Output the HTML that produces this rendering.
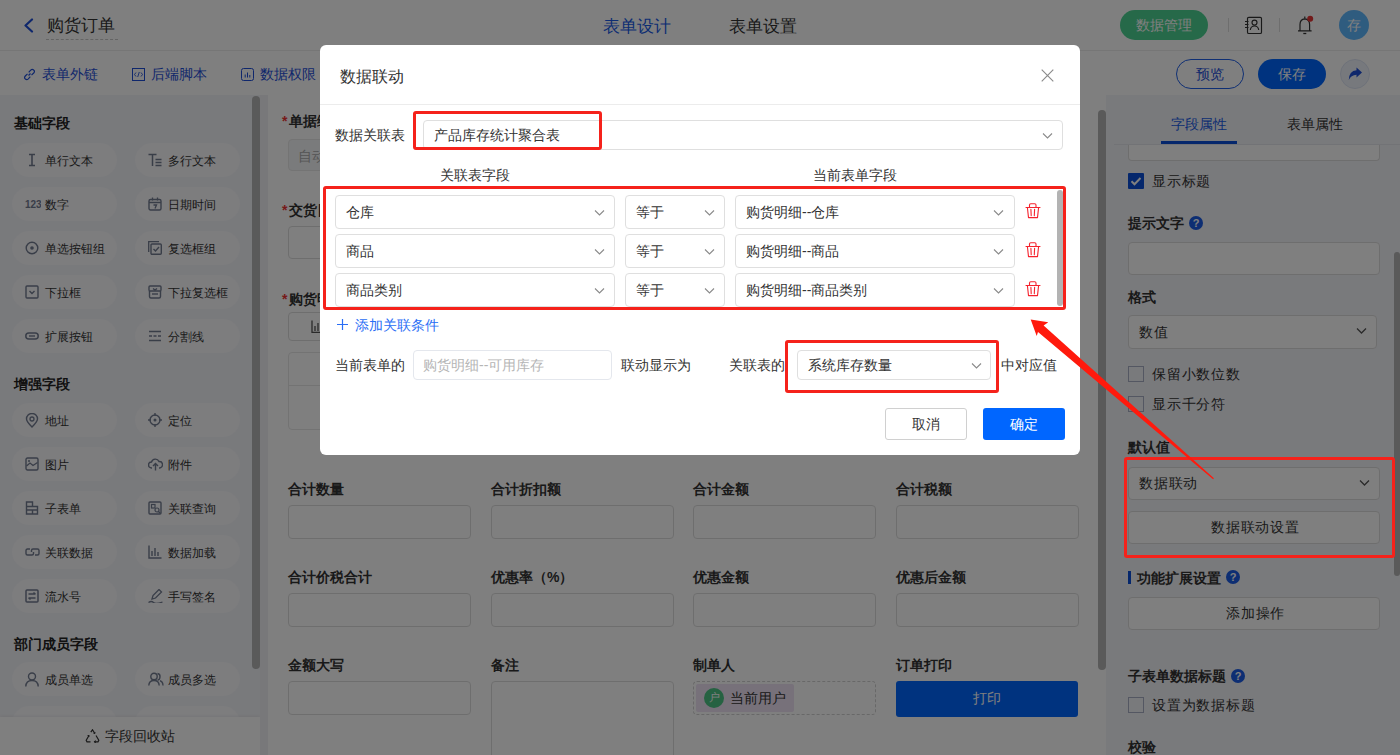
<!DOCTYPE html>
<html><head><meta charset="utf-8">
<style>
*{box-sizing:border-box;margin:0;padding:0}
html,body{width:1400px;height:755px;overflow:hidden;background:#fff;font-family:"Liberation Sans",sans-serif;color:#333;font-size:14px}
.a{position:absolute}
svg{display:block}
.t{position:absolute;white-space:nowrap;line-height:1}
/* header */
#hdr{left:0;top:0;width:1400px;height:51px;background:#fff;border-bottom:1px solid #ececec}
#tb{left:0;top:51px;width:1400px;height:44px;background:#fff}
#lp{left:0;top:95px;width:260px;height:660px;background:#f3f4f8}
#cv{left:260px;top:95px;width:848px;height:660px;background:#f0f1f5}
#form{left:268px;top:95px;width:838px;height:660px;background:#fff}
#rp{left:1106px;top:95px;width:294px;height:660px;background:#f3f4f8}
.pill{position:absolute;height:34px;border-radius:17px;background:#fafafd;width:106px}
.pill span{position:absolute;left:30px;top:11.8px;font-size:12px;line-height:13px;color:#333;white-space:nowrap}
.sec{position:absolute;left:14px;font-size:14px;font-weight:bold;color:#222;line-height:1}
.flab{position:absolute;font-size:14px;font-weight:bold;color:#333;line-height:1;white-space:nowrap}
.finp{position:absolute;height:33px;border:1px solid #ddd;border-radius:4px;background:#fff}
#ov{left:0;top:0;width:1400px;height:755px;background:rgba(0,0,0,.5)}
#modal{left:320px;top:45px;width:760px;height:410px;background:#fff;border-radius:6px}
.sel{position:absolute;height:33px;border:1px solid #dfdfdf;border-radius:4px;background:#fff}
.sel span{position:absolute;left:10px;top:9px;font-size:13px;line-height:14px;color:#333;white-space:nowrap}
.chev{position:absolute;top:12px;width:8px;height:8px}
.red{position:absolute;border:3px solid #f5221b;border-radius:3px}
</style></head><body>
<!-- HEADER -->
<div id="hdr" class="a"></div>
<div id="tb" class="a"></div>
<div id="lp" class="a"></div>
<div id="lpc" class="a" style="left:0;top:0;width:260px;height:755px;overflow:hidden">
<div class="sec" style="top:116px">基础字段</div>
<div class="sec" style="top:377px">增强字段</div>
<div class="sec" style="top:637px">部门成员字段</div>
<div class="pill" style="left:12px;top:143px;width:105px"><div class="a" style="left:13px;top:10px"><svg width="14" height="14" viewBox="0 0 14 14"><path d="M4 1.5h6M4 12.5h6M7 1.5v11" stroke="#737c91" stroke-width="1.6"/></svg></div><span style="left:33px">单行文本</span></div>
<div class="pill" style="left:135px;top:143px;width:105px"><div class="a" style="left:13px;top:10px"><svg width="14" height="14" viewBox="0 0 14 14"><path d="M0.5 1.5h8M4.5 1.5v11.5M7.5 6.5h6M7.5 9.5h6M7.5 12.5h6" stroke="#737c91" stroke-width="1.5"/></svg></div><span style="left:33px">多行文本</span></div>
<div class="pill" style="left:12px;top:187px;width:105px"><div class="a" style="left:13px;top:10px"><svg width="16" height="14" viewBox="0 0 16 14"><text x="0" y="11" font-family="Liberation Sans" font-weight="bold" font-size="10" fill="#737c91">123</text></svg></div><span style="left:33px">数字</span></div>
<div class="pill" style="left:135px;top:187px;width:105px"><div class="a" style="left:13px;top:10px"><svg width="14" height="14" viewBox="0 0 14 14"><rect x="1" y="2.5" width="12" height="10.5" rx="1.5" fill="none" stroke="#737c91" stroke-width="1.4"/><path d="M1 5.5h12M4.5 0.5v3M9.5 0.5v3M5.5 8h3l-1.5 3.5" fill="none" stroke="#737c91" stroke-width="1.3"/></svg></div><span style="left:33px">日期时间</span></div>
<div class="pill" style="left:12px;top:231px;width:105px"><div class="a" style="left:13px;top:10px"><svg width="14" height="14" viewBox="0 0 14 14"><circle cx="7" cy="7" r="5.8" fill="none" stroke="#737c91" stroke-width="1.4"/><circle cx="7" cy="7" r="1.8" fill="#737c91"/></svg></div><span style="left:33px">单选按钮组</span></div>
<div class="pill" style="left:135px;top:231px;width:105px"><div class="a" style="left:13px;top:10px"><svg width="14" height="14" viewBox="0 0 14 14"><path d="M0.7 11V0.7H11" fill="none" stroke="#737c91" stroke-width="1.3"/><rect x="3" y="3" width="10.3" height="10.3" rx="1" fill="none" stroke="#737c91" stroke-width="1.4"/><path d="M5.5 8l2 2 3.5-4" fill="none" stroke="#737c91" stroke-width="1.4"/></svg></div><span style="left:33px">复选框组</span></div>
<div class="pill" style="left:12px;top:275px;width:105px"><div class="a" style="left:13px;top:10px"><svg width="14" height="14" viewBox="0 0 14 14"><rect x="1" y="1" width="12" height="12" rx="1" fill="none" stroke="#737c91" stroke-width="1.4"/><path d="M4.5 6l2.5 2.5 2.5-2.5" fill="none" stroke="#737c91" stroke-width="1.4"/></svg></div><span style="left:33px">下拉框</span></div>
<div class="pill" style="left:135px;top:275px;width:105px"><div class="a" style="left:13px;top:10px"><svg width="14" height="14" viewBox="0 0 14 14"><rect x="1" y="1" width="12" height="5" rx="1" fill="none" stroke="#737c91" stroke-width="1.4"/><path d="M1.5 6v5.5q0 1.5 1.5 1.5h8q1.5 0 1.5-1.5V6M5 3.5l2 1.5 2-1.5" fill="none" stroke="#737c91" stroke-width="1.4"/><path d="M4 9h6" stroke="#737c91" stroke-width="1.4"/></svg></div><span style="left:33px">下拉复选框</span></div>
<div class="pill" style="left:12px;top:319px;width:105px"><div class="a" style="left:13px;top:10px"><svg width="14" height="14" viewBox="0 0 14 14"><rect x="0.8" y="4" width="12.4" height="6" rx="3" fill="none" stroke="#737c91" stroke-width="1.5"/><path d="M4 7h6" stroke="#737c91" stroke-width="1.4"/></svg></div><span style="left:33px">扩展按钮</span></div>
<div class="pill" style="left:135px;top:319px;width:105px"><div class="a" style="left:13px;top:10px"><svg width="14" height="14" viewBox="0 0 14 14"><path d="M1 2.5h12M1 11.5h12M1 7h3M5.5 7h3M10 7h3" stroke="#737c91" stroke-width="1.4"/></svg></div><span style="left:33px">分割线</span></div>
<div class="pill" style="left:12px;top:403px;width:105px"><div class="a" style="left:13px;top:10px"><svg width="14" height="15" viewBox="0 0 14 15"><path d="M7 14 Q1.5 8.5 1.5 6 A5.5 5.5 0 0 1 12.5 6 Q12.5 8.5 7 14Z" fill="none" stroke="#737c91" stroke-width="1.4"/><circle cx="7" cy="6" r="2" fill="none" stroke="#737c91" stroke-width="1.3"/></svg></div><span style="left:33px">地址</span></div>
<div class="pill" style="left:135px;top:403px;width:105px"><div class="a" style="left:13px;top:10px"><svg width="14" height="14" viewBox="0 0 14 14"><circle cx="7" cy="7" r="5" fill="none" stroke="#737c91" stroke-width="1.4"/><circle cx="7" cy="7" r="1.5" fill="#737c91"/><path d="M7 0v3M7 11v3M0 7h3M11 7h3" stroke="#737c91" stroke-width="1.4"/></svg></div><span style="left:33px">定位</span></div>
<div class="pill" style="left:12px;top:447px;width:105px"><div class="a" style="left:13px;top:10px"><svg width="14" height="14" viewBox="0 0 14 14"><rect x="1" y="1" width="12" height="12" rx="1.5" fill="none" stroke="#737c91" stroke-width="1.4"/><path d="M1.5 9l3.5-3 3 2.5 4.5-3" fill="none" stroke="#737c91" stroke-width="1.3"/><circle cx="4" cy="4" r="1" fill="#737c91"/></svg></div><span style="left:33px">图片</span></div>
<div class="pill" style="left:135px;top:447px;width:105px"><div class="a" style="left:13px;top:10px"><svg width="15" height="14" viewBox="0 0 15 14"><path d="M4 11H3.5A3 3 0 0 1 3.5 5 A4 4 0 0 1 11 4.5 A3.2 3.2 0 0 1 11.5 11H11" fill="none" stroke="#737c91" stroke-width="1.4"/><path d="M7.5 13.5V7M5 9l2.5-2.5L10 9" fill="none" stroke="#737c91" stroke-width="1.4"/></svg></div><span style="left:33px">附件</span></div>
<div class="pill" style="left:12px;top:491px;width:105px"><div class="a" style="left:13px;top:10px"><svg width="14" height="14" viewBox="0 0 14 14"><path d="M1.5 13V1h6v4.5h5V13Z M1.5 5.5h6M7.5 9h5M1.5 9h6V13" fill="none" stroke="#737c91" stroke-width="1.4"/></svg></div><span style="left:33px">子表单</span></div>
<div class="pill" style="left:135px;top:491px;width:105px"><div class="a" style="left:13px;top:10px"><svg width="14" height="14" viewBox="0 0 14 14"><rect x="1" y="1" width="12" height="12" rx="1" fill="none" stroke="#737c91" stroke-width="1.4"/><rect x="3.5" y="3.5" width="3.5" height="3.5" fill="none" stroke="#737c91" stroke-width="1.2"/><circle cx="9" cy="9" r="2" fill="none" stroke="#737c91" stroke-width="1.2"/><path d="M10.5 10.5l2 2" stroke="#737c91" stroke-width="1.2"/></svg></div><span style="left:33px">关联查询</span></div>
<div class="pill" style="left:12px;top:535px;width:105px"><div class="a" style="left:13px;top:10px"><svg width="15" height="14" viewBox="0 0 15 14"><path d="M5 4H2.5Q1 4 1 5.5v3Q1 10 2.5 10H7Q8.5 10 8.5 8.5V7" fill="none" stroke="#737c91" stroke-width="1.4"/><path d="M10 10h2.5Q14 10 14 8.5v-3Q14 4 12.5 4H8Q6.5 4 6.5 5.5V7" fill="none" stroke="#737c91" stroke-width="1.4"/></svg></div><span style="left:33px">关联数据</span></div>
<div class="pill" style="left:135px;top:535px;width:105px"><div class="a" style="left:13px;top:10px"><svg width="14" height="14" viewBox="0 0 14 14"><path d="M1 0.5V13h12.5M4 6v5M7 3v8M10 7v4" fill="none" stroke="#737c91" stroke-width="1.4"/></svg></div><span style="left:33px">数据加载</span></div>
<div class="pill" style="left:12px;top:579px;width:105px"><div class="a" style="left:13px;top:10px"><svg width="14" height="14" viewBox="0 0 14 14"><rect x="1" y="1" width="12" height="12" rx="1" fill="none" stroke="#737c91" stroke-width="1.5"/><path d="M3.5 5h7M3.5 9h7M8.5 3.5l2 1.5M5.5 10.5l-2-1.5" fill="none" stroke="#737c91" stroke-width="1.3"/></svg></div><span style="left:33px">流水号</span></div>
<div class="pill" style="left:135px;top:579px;width:105px"><div class="a" style="left:13px;top:10px"><svg width="15" height="14" viewBox="0 0 15 14"><path d="M4 10l1-3.5 6-6 2.5 2.5-6 6Z" fill="none" stroke="#737c91" stroke-width="1.3"/><path d="M0.5 13.5q3-2 5 0t9-0.5" fill="none" stroke="#737c91" stroke-width="1.3"/></svg></div><span style="left:33px">手写签名</span></div>
<div class="pill" style="left:12px;top:662px;width:105px"><div class="a" style="left:13px;top:10px"><svg width="14" height="15" viewBox="0 0 14 15"><circle cx="7" cy="4.5" r="3.5" fill="none" stroke="#737c91" stroke-width="1.4"/><path d="M0.8 14.5Q1 8.5 7 8.5T13.2 14.5" fill="none" stroke="#737c91" stroke-width="1.4"/></svg></div><span style="left:33px">成员单选</span></div>
<div class="pill" style="left:135px;top:662px;width:105px"><div class="a" style="left:13px;top:10px"><svg width="16" height="15" viewBox="0 0 16 15"><circle cx="6" cy="4.5" r="3.2" fill="none" stroke="#737c91" stroke-width="1.4"/><path d="M0.8 13.5Q1 8.5 6 8.5T11.2 13.5" fill="none" stroke="#737c91" stroke-width="1.4"/><path d="M9.5 1.5Q12.3 1.8 12 5T9.5 8M12 8.8Q14.8 9.5 15 13.5" fill="none" stroke="#737c91" stroke-width="1.4"/></svg></div><span style="left:33px">成员多选</span></div>
<div class="pill" style="left:12px;top:706px;width:105px"></div>
<div class="pill" style="left:135px;top:706px;width:105px"></div>
</div>
<div class="a" style="left:252px;top:96px;width:8px;height:573px;border-radius:4px;background:#b4b4b4"></div>
<div class="a" style="left:0;top:717px;width:260px;height:38px;background:#fff;box-shadow:0 -1px 3px rgba(0,0,0,.06)"></div>
<div class="a" style="left:85px;top:729px"><svg width="15" height="14" viewBox="0 0 15 14"><path d="M5.8 3.2L7.5 0.8 9.5 4M11 6.5l2.8 4.8-0.8 1.5H9.5M5.5 12.8H2l-0.8-1.5 2.5-4.3" fill="none" stroke="#333" stroke-width="1.2"/><path d="M8.5 4.3l1.2 0.1 0.4-1.2M10.8 11.6l-1.3 1.2 1.2 1M2.6 6.5l1.3 0.1 0.1 1.3" fill="none" stroke="#333" stroke-width="1.1"/></svg></div>
<div class="t" style="left:105px;top:729px;font-size:14px;color:#333">字段回收站</div>
<div id="cv" class="a"></div>
<div id="form" class="a"></div>
<div id="rp" class="a"></div>
<div id="fc" class="a" style="left:0;top:0;width:1400px;height:755px">
<div class="flab" style="left:282px;top:114px"><span style="color:#e33;margin-right:2px">*</span>单据编号</div>
<div class="finp" style="left:288px;top:139px;width:182px;height:32px;background:#f5f6f8;border-color:#e8e8e8"></div>
<div class="t" style="left:298px;top:149px;font-size:14px;color:#aaa">自动生成</div>
<div class="flab" style="left:282px;top:203px"><span style="color:#e33;margin-right:2px">*</span>交货日期</div>
<div class="finp" style="left:288px;top:226px;width:182px;height:33px"></div>
<div class="flab" style="left:282px;top:292px"><span style="color:#e33;margin-right:2px">*</span>购货明细</div>
<div class="finp" style="left:288px;top:312px;width:90px;height:29px"></div>
<div class="a" style="left:311px;top:320px"><svg width="13" height="13" viewBox="0 0 13 13"><path d="M1 0.5V12.5H12.5M4 6v5M7 3v8M10 7v4" fill="none" stroke="#555" stroke-width="1.3"/></svg></div>
<div class="finp" style="left:288px;top:352px;width:790px;height:78px;border-color:#e6e6e6"></div>
<div class="a" style="left:288px;top:385px;width:790px;height:1px;background:#e6e6e6"></div>
<div class="flab" style="left:288px;top:482px">合计数量</div>
<div class="finp" style="left:288px;top:505px;width:183px;height:34px"></div>
<div class="flab" style="left:491px;top:482px">合计折扣额</div>
<div class="finp" style="left:491px;top:505px;width:183px;height:34px"></div>
<div class="flab" style="left:693px;top:482px">合计金额</div>
<div class="finp" style="left:693px;top:505px;width:183px;height:34px"></div>
<div class="flab" style="left:896px;top:482px">合计税额</div>
<div class="finp" style="left:896px;top:505px;width:183px;height:34px"></div>
<div class="flab" style="left:288px;top:570px">合计价税合计</div>
<div class="finp" style="left:288px;top:593px;width:183px;height:34px"></div>
<div class="flab" style="left:491px;top:570px">优惠率（%）</div>
<div class="finp" style="left:491px;top:593px;width:183px;height:34px"></div>
<div class="flab" style="left:693px;top:570px">优惠金额</div>
<div class="finp" style="left:693px;top:593px;width:183px;height:34px"></div>
<div class="flab" style="left:896px;top:570px">优惠后金额</div>
<div class="finp" style="left:896px;top:593px;width:183px;height:34px"></div>
<div class="flab" style="left:288px;top:658px">金额大写</div>
<div class="finp" style="left:288px;top:681px;width:183px;height:34px"></div>
<div class="flab" style="left:491px;top:658px">备注</div>
<div class="flab" style="left:693px;top:658px">制单人</div>
<div class="flab" style="left:896px;top:658px">订单打印</div>
<div class="finp" style="left:491px;top:681px;width:183px;height:90px"></div>
<div class="a" style="left:693px;top:681px;width:183px;height:34px;border:1px dashed #d0d0d0;border-radius:4px"></div>
<div class="a" style="left:696px;top:684px;width:98px;height:28px;background:#efe3f5;border-radius:2px"></div>
<div class="a" style="left:704px;top:688px;width:20px;height:20px;border-radius:10px;background:#4cc485"></div>
<div class="t" style="left:709px;top:692px;font-size:11px;color:#fff">户</div>
<div class="t" style="left:730px;top:691px;font-size:14px;color:#333">当前用户</div>
<div class="a" style="left:896px;top:681px;width:182px;height:36px;background:#0066ff;border-radius:3px"></div>
<div class="t" style="left:973px;top:691px;font-size:14px;color:#fff">打印</div>
<div class="a" style="left:1098px;top:110px;width:8px;height:560px;border-radius:4px;background:#b4b4b4"></div>
</div>

<div class="a" style="left:23px;top:18px;width:11px;height:15px"><svg width="11" height="15" viewBox="0 0 11 15"><path d="M9 1.5 L2.5 7.5 L9 13.5" fill="none" stroke="#1f4fd8" stroke-width="2.2" stroke-linecap="round" stroke-linejoin="round"/></svg></div>
<div class="t" style="left:47px;top:17px;font-size:17px;color:#333">购货订单</div>
<div class="a" style="left:46px;top:39px;width:72px;border-top:1px dashed #c8c8c8"></div>
<div class="t" style="left:603px;top:17.5px;font-size:16.5px;color:#1a5ce6">表单设计</div>
<div class="t" style="left:729px;top:17.5px;font-size:16.5px;color:#333">表单设置</div>
<div class="a" style="left:1120px;top:10px;width:88px;height:30px;border-radius:15px;background:#4cd292"></div>
<div class="t" style="left:1136px;top:17.5px;font-size:14px;color:#fff">数据管理</div>
<div class="a" style="left:1228px;top:18px;width:1px;height:14px;background:#ddd"></div>
<div class="a" style="left:1244px;top:16px"><svg width="19" height="19" viewBox="0 0 19 19"><rect x="3.5" y="1.3" width="14" height="16.2" rx="1.3" fill="none" stroke="#333" stroke-width="1.15"/><circle cx="10.5" cy="6.6" r="2.5" fill="none" stroke="#333" stroke-width="1.15"/><path d="M6.3 14 Q6.8 10 10.5 10 Q14.2 10 14.7 14" fill="none" stroke="#333" stroke-width="1.15"/><path d="M1 5.5h3.5M1 8.5h3.5M1 11.5h3.5" stroke="#333" stroke-width="1.1"/></svg></div>
<div class="a" style="left:1279px;top:18px;width:1px;height:14px;background:#ddd"></div>
<div class="a" style="left:1296px;top:15px"><svg width="18" height="20" viewBox="0 0 18 20"><path d="M4 15.5V9.5Q4 4.2 8.8 3.8Q13.6 4.2 13.6 9.5V15.5M2 15.8H15.6" fill="none" stroke="#333" stroke-width="1.2" stroke-linejoin="round"/><path d="M7.3 18.5h3" stroke="#333" stroke-width="1.3"/><path d="M8.8 1.5v2" stroke="#333" stroke-width="1.2"/><circle cx="14.2" cy="3.8" r="3" fill="#e53535"/></svg></div>
<div class="a" style="left:1339px;top:10px;width:30px;height:30px;border-radius:15px;background:#5fb8ff"></div>
<div class="t" style="left:1347px;top:18px;font-size:14px;color:#fff">存</div>
<!-- toolbar -->
<div class="a" style="left:23px;top:68px"><svg width="13" height="13" viewBox="0 0 13 13"><path d="M5.5 7.5 L7.5 5.5" stroke="#1f4fd8" stroke-width="1.2"/><path d="M4.5 5.8 L2.3 8 Q0.8 9.8 2.4 11 Q3.8 12.3 5.3 10.8 L7.3 8.7" fill="none" stroke="#1f4fd8" stroke-width="1.2"/><path d="M8.5 7.2 L10.7 5 Q12.2 3.2 10.6 2 Q9.2 0.7 7.7 2.2 L5.7 4.3" fill="none" stroke="#1f4fd8" stroke-width="1.2"/></svg></div>
<div class="t" style="left:42px;top:67px;font-size:14px;color:#1f4fd8">表单外链</div>
<div class="a" style="left:132px;top:68px"><svg width="13" height="13" viewBox="0 0 13 13"><rect x="0.5" y="0.5" width="12" height="12" fill="none" stroke="#1f4fd8" stroke-width="1"/><path d="M4 4.5 L2.5 6.5 L4 8.5 M9 4.5 L10.5 6.5 L9 8.5 M7.3 4 L5.7 9" fill="none" stroke="#1f4fd8" stroke-width="0.9"/></svg></div>
<div class="t" style="left:151px;top:67px;font-size:14px;color:#1f4fd8">后端脚本</div>
<div class="a" style="left:241px;top:68px"><svg width="13" height="13" viewBox="0 0 13 13"><rect x="0.5" y="0.5" width="12" height="12" rx="2" fill="none" stroke="#1f4fd8" stroke-width="1"/><path d="M4.2 6.5v3 M6.5 4.5v5 M8.8 7v2.5" stroke="#1f4fd8" stroke-width="1"/></svg></div>
<div class="t" style="left:260px;top:67px;font-size:14px;color:#1f4fd8">数据权限</div>
<div class="a" style="left:1176px;top:59px;width:68px;height:30px;border-radius:15px;border:1px solid #1f5fe8;background:#fff"></div>
<div class="t" style="left:1196px;top:67px;font-size:14px;color:#1f4fd8">预览</div>
<div class="a" style="left:1258px;top:59px;width:68px;height:30px;border-radius:15px;background:#0066ff"></div>
<div class="t" style="left:1278px;top:67px;font-size:14px;color:#fff">保存</div>
<div class="a" style="left:1340px;top:59px;width:30px;height:30px;border-radius:15px;background:#eef2fb;border:1px solid #dde4f3"></div>
<div class="a" style="left:1348px;top:67px"><svg width="15" height="14" viewBox="0 0 15 14"><path d="M14 5.5 L8.5 0.5 L8.5 3.3 Q1 4 0.8 13 Q3 8 8.5 7.8 L8.5 10.5 Z" fill="#1f4fd8"/></svg></div>

<div id="rpc" class="a" style="left:0;top:0;width:1400px;height:755px">
<div class="t" style="left:1171px;top:117px;font-size:14px;color:#1a5ce6">字段属性</div>
<div class="t" style="left:1287px;top:117px;font-size:14px;color:#333">表单属性</div>
<div class="a" style="left:1114px;top:144px;width:286px;height:1px;background:#e4e6ec"></div>
<div class="a" style="left:1161px;top:141px;width:76px;height:3px;background:#0a4fd8"></div>
<div class="finp" style="left:1128px;top:145px;width:252px;height:16px;border-top:none;border-radius:0 0 4px 4px"></div>
<div class="a" style="left:1128px;top:173px;width:16px;height:16px;background:#0a4fd8;border-radius:1px"><svg width="16" height="16" viewBox="0 0 16 16"><path d="M3.5 8.2l3 3 6-6.2" fill="none" stroke="#fff" stroke-width="2"/></svg></div>
<div class="t" style="left:1152px;top:174px;font-size:14px;color:#333;letter-spacing:0.8px">显示标题</div>
<div class="flab" style="left:1128px;top:216px">提示文字</div>
<div class="a" style="left:1189px;top:216px;width:14px;height:14px;border-radius:7px;background:#1a5ce6;color:#fff;font-size:11px;font-weight:bold;line-height:14px;text-align:center;font-family:'Liberation Sans',sans-serif">?</div>
<div class="finp" style="left:1128px;top:242px;width:252px;height:33px"></div>
<div class="flab" style="left:1128px;top:290px">格式</div>
<div class="finp" style="left:1128px;top:315px;width:249px;height:34px"></div>
<div class="t" style="left:1139px;top:325px;font-size:14px;color:#333;letter-spacing:0.8px">数值</div>
<div class="a" style="left:1356px;top:327px"><svg width="11" height="8" viewBox="0 0 11 8"><path d="M1 1.5l4.5 4.5 4.5-4.5" fill="none" stroke="#555" stroke-width="1.3"/></svg></div>
<div class="a" style="left:1128px;top:366px;width:16px;height:16px;border:1px solid #a9afc4;background:transparent"></div>
<div class="t" style="left:1152px;top:367px;font-size:14px;color:#333;letter-spacing:0.8px">保留小数位数</div>
<div class="a" style="left:1128px;top:396px;width:16px;height:16px;border:1px solid #a9afc4;background:transparent"></div>
<div class="t" style="left:1152px;top:397px;font-size:14px;color:#333;letter-spacing:0.8px">显示千分符</div>
<div class="flab" style="left:1128px;top:440px">默认值</div>
<div class="finp" style="left:1128px;top:467px;width:252px;height:33px"></div>
<div class="t" style="left:1139px;top:476px;font-size:14px;color:#333;letter-spacing:0.8px">数据联动</div>
<div class="a" style="left:1359px;top:479px"><svg width="11" height="8" viewBox="0 0 11 8"><path d="M1 1.5l4.5 4.5 4.5-4.5" fill="none" stroke="#555" stroke-width="1.3"/></svg></div>
<div class="finp" style="left:1128px;top:511px;width:252px;height:33px"></div>
<div class="t" style="left:1211px;top:520px;font-size:14px;color:#333;letter-spacing:0.8px">数据联动设置</div>
<div class="a" style="left:1128px;top:571px;width:3px;height:13px;background:#0a4fd8"></div>
<div class="flab" style="left:1137px;top:571px">功能扩展设置</div>
<div class="a" style="left:1226px;top:570px;width:14px;height:14px;border-radius:7px;background:#1a5ce6;color:#fff;font-size:11px;font-weight:bold;line-height:14px;text-align:center;font-family:'Liberation Sans',sans-serif">?</div>
<div class="finp" style="left:1128px;top:597px;width:252px;height:33px"></div>
<div class="t" style="left:1226px;top:606px;font-size:14px;color:#333;letter-spacing:0.8px">添加操作</div>
<div class="flab" style="left:1128px;top:669px">子表单数据标题</div>
<div class="a" style="left:1231px;top:669px;width:14px;height:14px;border-radius:7px;background:#1a5ce6;color:#fff;font-size:11px;font-weight:bold;line-height:14px;text-align:center;font-family:'Liberation Sans',sans-serif">?</div>
<div class="a" style="left:1128px;top:697px;width:16px;height:16px;border:1px solid #a9afc4;background:transparent"></div>
<div class="t" style="left:1152px;top:698px;font-size:14px;color:#333;letter-spacing:0.8px">设置为数据标题</div>
<div class="flab" style="left:1128px;top:740px">校验</div>
<div class="a" style="left:1394px;top:252px;width:6px;height:324px;border-radius:3px;background:#b4b4b4"></div>
</div>
<div id="ov" class="a"></div>

<div id="modal" class="a"></div>
<div id="mc" class="a" style="left:0;top:0;width:1400px;height:755px">
<div class="t" style="left:340px;top:69px;font-size:16px;color:#333">数据联动</div>
<div class="a" style="left:1041px;top:69px"><svg width="13" height="13" viewBox="0 0 13 13"><path d="M0.7 0.7l11.6 11.6M12.3 0.7L0.7 12.3" stroke="#8a8a8a" stroke-width="1.15"/></svg></div>
<div class="a" style="left:320px;top:104px;width:760px;height:1px;background:#ececec"></div>
<div class="t" style="left:335px;top:128px;font-size:14px;color:#333">数据关联表</div>
<div class="sel" style="left:423px;top:120px;width:640px;height:30px"></div>
<div class="t" style="left:434px;top:128px;font-size:14px;color:#333">产品库存统计聚合表</div>
<div class="a" style="left:1042px;top:132px"><svg width="11" height="8" viewBox="0 0 11 8"><path d="M1 1.5l4.5 4.5 4.5-4.5" fill="none" stroke="#8a8a8a" stroke-width="1.1"/></svg></div>
<div class="t" style="left:440px;top:168px;font-size:14px;color:#333">关联表字段</div>
<div class="t" style="left:813px;top:168px;font-size:14px;color:#333">当前表单字段</div>
<div class="sel" style="left:335px;top:195px;width:280px;height:34px"></div>
<div class="t" style="left:346px;top:205px;font-size:14px;color:#333">仓库</div>
<div class="a" style="left:594px;top:209px"><svg width="11" height="8" viewBox="0 0 11 8"><path d="M1 1.5l4.5 4.5 4.5-4.5" fill="none" stroke="#8a8a8a" stroke-width="1.1"/></svg></div>
<div class="sel" style="left:625px;top:195px;width:100px;height:34px"></div>
<div class="t" style="left:636px;top:205px;font-size:14px;color:#333">等于</div>
<div class="a" style="left:704px;top:209px"><svg width="11" height="8" viewBox="0 0 11 8"><path d="M1 1.5l4.5 4.5 4.5-4.5" fill="none" stroke="#8a8a8a" stroke-width="1.1"/></svg></div>
<div class="sel" style="left:735px;top:195px;width:280px;height:34px"></div>
<div class="t" style="left:746px;top:205px;font-size:14px;color:#333">购货明细--仓库</div>
<div class="a" style="left:993px;top:209px"><svg width="11" height="8" viewBox="0 0 11 8"><path d="M1 1.5l4.5 4.5 4.5-4.5" fill="none" stroke="#8a8a8a" stroke-width="1.1"/></svg></div>
<div class="a" style="left:1025px;top:203px"><svg width="16" height="16" viewBox="0 0 16 16"><path d="M4.5 4.5V2.1Q4.5 0.8 5.8 0.8H9.7Q11 0.8 11 2.1V4.5M1 4.5H15M2.4 4.5L3.5 14.6H12.5L13.6 4.5M5.9 6.3L6.2 12.6M9.6 6.3L9.3 12.6" fill="none" stroke="#f5222d" stroke-width="1.1" stroke-linecap="round" stroke-linejoin="round"/></svg></div>
<div class="sel" style="left:335px;top:234px;width:280px;height:34px"></div>
<div class="t" style="left:346px;top:244px;font-size:14px;color:#333">商品</div>
<div class="a" style="left:594px;top:248px"><svg width="11" height="8" viewBox="0 0 11 8"><path d="M1 1.5l4.5 4.5 4.5-4.5" fill="none" stroke="#8a8a8a" stroke-width="1.1"/></svg></div>
<div class="sel" style="left:625px;top:234px;width:100px;height:34px"></div>
<div class="t" style="left:636px;top:244px;font-size:14px;color:#333">等于</div>
<div class="a" style="left:704px;top:248px"><svg width="11" height="8" viewBox="0 0 11 8"><path d="M1 1.5l4.5 4.5 4.5-4.5" fill="none" stroke="#8a8a8a" stroke-width="1.1"/></svg></div>
<div class="sel" style="left:735px;top:234px;width:280px;height:34px"></div>
<div class="t" style="left:746px;top:244px;font-size:14px;color:#333">购货明细--商品</div>
<div class="a" style="left:993px;top:248px"><svg width="11" height="8" viewBox="0 0 11 8"><path d="M1 1.5l4.5 4.5 4.5-4.5" fill="none" stroke="#8a8a8a" stroke-width="1.1"/></svg></div>
<div class="a" style="left:1025px;top:242px"><svg width="16" height="16" viewBox="0 0 16 16"><path d="M4.5 4.5V2.1Q4.5 0.8 5.8 0.8H9.7Q11 0.8 11 2.1V4.5M1 4.5H15M2.4 4.5L3.5 14.6H12.5L13.6 4.5M5.9 6.3L6.2 12.6M9.6 6.3L9.3 12.6" fill="none" stroke="#f5222d" stroke-width="1.1" stroke-linecap="round" stroke-linejoin="round"/></svg></div>
<div class="sel" style="left:335px;top:273px;width:280px;height:34px"></div>
<div class="t" style="left:346px;top:283px;font-size:14px;color:#333">商品类别</div>
<div class="a" style="left:594px;top:287px"><svg width="11" height="8" viewBox="0 0 11 8"><path d="M1 1.5l4.5 4.5 4.5-4.5" fill="none" stroke="#8a8a8a" stroke-width="1.1"/></svg></div>
<div class="sel" style="left:625px;top:273px;width:100px;height:34px"></div>
<div class="t" style="left:636px;top:283px;font-size:14px;color:#333">等于</div>
<div class="a" style="left:704px;top:287px"><svg width="11" height="8" viewBox="0 0 11 8"><path d="M1 1.5l4.5 4.5 4.5-4.5" fill="none" stroke="#8a8a8a" stroke-width="1.1"/></svg></div>
<div class="sel" style="left:735px;top:273px;width:280px;height:34px"></div>
<div class="t" style="left:746px;top:283px;font-size:14px;color:#333">购货明细--商品类别</div>
<div class="a" style="left:993px;top:287px"><svg width="11" height="8" viewBox="0 0 11 8"><path d="M1 1.5l4.5 4.5 4.5-4.5" fill="none" stroke="#8a8a8a" stroke-width="1.1"/></svg></div>
<div class="a" style="left:1025px;top:281px"><svg width="16" height="16" viewBox="0 0 16 16"><path d="M4.5 4.5V2.1Q4.5 0.8 5.8 0.8H9.7Q11 0.8 11 2.1V4.5M1 4.5H15M2.4 4.5L3.5 14.6H12.5L13.6 4.5M5.9 6.3L6.2 12.6M9.6 6.3L9.3 12.6" fill="none" stroke="#f5222d" stroke-width="1.1" stroke-linecap="round" stroke-linejoin="round"/></svg></div>
<div class="a" style="left:1057px;top:190px;width:6px;height:116px;border-radius:3px;background:#b3b3b3"></div>
<div class="a" style="left:337px;top:319px"><svg width="11" height="11" viewBox="0 0 11 11"><path d="M5.5 0v11M0 5.5h11" stroke="#2a6ef5" stroke-width="1.2"/></svg></div>
<div class="t" style="left:355px;top:318px;font-size:14px;color:#2a6ef5">添加关联条件</div>
<div class="t" style="left:335px;top:358px;font-size:14px;color:#333">当前表单的</div>
<div class="sel" style="left:413px;top:350px;width:199px;height:30px;border-color:#e4e7ed"></div>
<div class="t" style="left:423px;top:358px;font-size:14px;color:#b5b5b5">购货明细--可用库存</div>
<div class="t" style="left:621px;top:358px;font-size:14px;color:#333">联动显示为</div>
<div class="t" style="left:729px;top:358px;font-size:14px;color:#333">关联表的</div>
<div class="sel" style="left:797px;top:350px;width:194px;height:30px"></div>
<div class="t" style="left:808px;top:358px;font-size:14px;color:#333">系统库存数量</div>
<div class="a" style="left:971px;top:362px"><svg width="11" height="8" viewBox="0 0 11 8"><path d="M1 1.5l4.5 4.5 4.5-4.5" fill="none" stroke="#8a8a8a" stroke-width="1.1"/></svg></div>
<div class="t" style="left:1001px;top:358px;font-size:14px;color:#333">中对应值</div>
<div class="a" style="left:885px;top:408px;width:82px;height:32px;border:1px solid #d0d0d0;border-radius:3px;background:#fff"></div>
<div class="t" style="left:912px;top:417px;font-size:14px;color:#333">取消</div>
<div class="a" style="left:983px;top:408px;width:82px;height:32px;border-radius:3px;background:#0066ff"></div>
<div class="t" style="left:1010px;top:417px;font-size:14px;color:#fff">确定</div>
</div>
<div class="red" style="left:413px;top:111px;width:189px;height:39px"></div>
<div class="red" style="left:323px;top:186px;width:743px;height:124px"></div>
<div class="red" style="left:785px;top:340px;width:214px;height:53px"></div>
<div class="red" style="left:1124px;top:457px;width:271px;height:101px"></div>
<svg class="a" style="left:0;top:0" width="1400" height="755"><polygon points="1030.7,319.4 1048.3,322.2 1043.6,325.5 1213.9,478.3 1213.1,479.3 1038,331.9 1036.7,336.1" fill="#ff1a0d"/></svg>
</body></html>
